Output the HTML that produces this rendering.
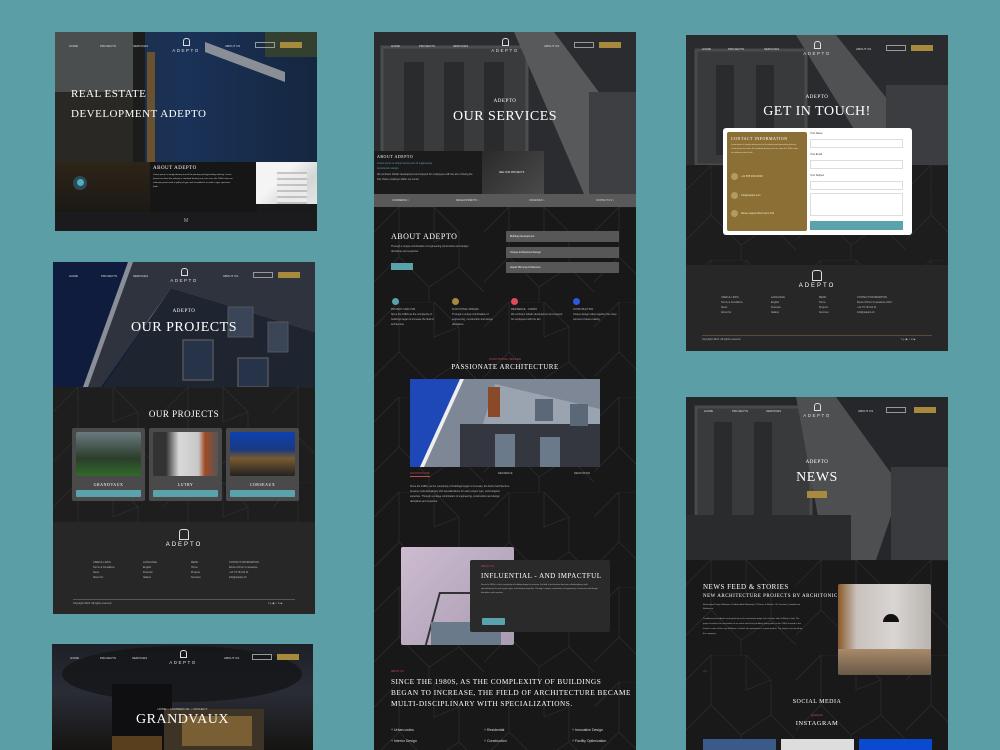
<!DOCTYPE html>
<html><head><meta charset="utf-8">
<style>
*{margin:0;padding:0;box-sizing:border-box}
body{width:1000px;height:750px;background:#5b9ea5;position:relative;overflow:hidden;font-family:"Liberation Sans",sans-serif;color:#fff}
.pg{position:absolute;overflow:hidden}
.a{position:absolute}
.serif{font-family:"Liberation Serif",serif;letter-spacing:.5px}
.nav{position:absolute;left:0;top:0;width:262px;height:30px;font-size:3px;color:#ddd}
.nav span{position:absolute;top:12px}
.logo{position:absolute;left:116px;top:6px;width:30px;text-align:center;font-size:4.5px;letter-spacing:1.5px}
.logo i{display:block;width:7px;height:8px;border:1px solid #ddd;margin:0 auto 2px;border-radius:3px 3px 0 0}
.lang{position:absolute;left:200px;top:10px;width:20px;height:6px;border:1px solid #999}
.btn{position:absolute;left:225px;top:10px;width:22px;height:6px;background:#a78a3e}
.t{font-size:2.5px;color:#bbb;line-height:5px}
.pat{position:absolute;left:0;width:262px}
</style></head><body>
<svg width="0" height="0" style="position:absolute"><defs>
<pattern id="p" width="110" height="95" patternUnits="userSpaceOnUse">
<path d="M0 25 L25 0 L60 0 L85 25 L85 60 L110 85 M25 0 L25 50 L55 80 L55 95 M85 60 L55 80 M0 75 L25 50 M60 0 L60 35 L85 25" stroke="#303031" stroke-width=".6" fill="none"/>
</pattern></defs></svg>

<!-- COL1 hero -->
<div class="pg" style="left:55px;top:32px;width:262px;height:199px;background:#1a1a1c">
 <svg class="a" style="left:0;top:0" width="262" height="162">
  <defs><linearGradient id="g1" x1="0" x2="1"><stop offset="0" stop-color="#202a3a"/><stop offset=".5" stop-color="#1a3258"/><stop offset="1" stop-color="#15263f"/></linearGradient></defs>
  <rect width="262" height="162" fill="url(#g1)"/>
  <rect x="0" y="0" width="90" height="162" fill="#2a2824"/>
  <rect x="0" y="0" width="90" height="60" fill="#5a5e62" opacity=".7"/>
  <rect x="78" y="0" width="12" height="162" fill="#1c1c1c"/>
  <rect x="92" y="20" width="8" height="110" fill="#6a5230"/>
  <polygon points="150,10 230,40 230,50 150,20" fill="#8a8e96"/>
  <rect x="210" y="0" width="52" height="25" fill="#33402f"/>
 </svg>
 <div class="nav"><span style="left:14px">HOME</span><span style="left:45px">PROJECTS</span><span style="left:78px">SERVICES</span><div class="logo"><i></i>ADEPTO</div><span style="left:170px">ABOUT US</span><div class="lang"></div><div class="btn"></div></div>
 <div class="a serif" style="left:16px;top:52px;font-size:11px;line-height:20px">REAL ESTATE<br>DEVELOPMENT ADEPTO</div>
 <div class="a" style="left:0;top:130px;width:95px;height:50px;background:linear-gradient(180deg,#2e2418,#1b1915)"></div>
 <div class="a" style="left:18px;top:144px;width:14px;height:14px;border-radius:50%;background:#2c4a55"></div>
 <div class="a" style="left:22px;top:147px;width:7px;height:7px;border-radius:50%;background:#4fb0c0"></div>
 <div class="a" style="left:0;top:180px;width:262px;height:19px;background:#1b1b1d"></div>
 <div class="a" style="left:95px;top:130px;width:107px;height:50px;background:#161616"></div>
 <div class="a serif" style="left:98px;top:134px;font-size:5px">ABOUT ADEPTO</div>
 <div class="a t" style="left:98px;top:141px;width:80px;font-size:2.2px;line-height:4px;color:#ccc">Lorem ipsum is simply dummy text of the printing and typesetting industry. Lorem Ipsum has been the industry's standard dummy text ever since the 1500s when an unknown printer took a galley of type and scrambled it to make a type specimen book.</div>
 <div class="a" style="left:201px;top:130px;width:61px;height:42px;background:linear-gradient(135deg,#f4f4f4 40%,#d5d5d5 70%,#e6e6e6)"></div>
 <div class="a" style="left:222px;top:140px;width:30px;height:32px;background:repeating-linear-gradient(180deg,#bbb 0 2px,#eee 2px 6px);opacity:.8"></div>
 <div class="a" style="left:129px;top:186px;font-size:5px;color:#aaa">M</div>
</div>

<!-- COL1 projects -->
<div class="pg" style="left:53px;top:262px;width:262px;height:352px;background:#1e1e1f">
 <svg class="a" style="left:0;top:0" width="262" height="125">
  <rect width="262" height="125" fill="#0f1c3d"/>
  <polygon points="75,0 262,0 262,75 120,30 40,125 30,125" fill="#8a8e98"/>
  <polygon points="80,0 262,0 262,70 118,26 48,125 35,125" fill="#2e333e"/>
  <polygon points="118,26 262,70 262,125 50,125" fill="#1f2431"/>
  <rect x="130" y="78" width="30" height="40" fill="#263349" stroke="#555" stroke-width="1.5"/>
  <rect x="185" y="96" width="30" height="29" fill="#263349" stroke="#555" stroke-width="1.5"/>
  <rect x="175" y="45" width="25" height="30" fill="#3a4558" stroke="#555" stroke-width="1"/>
  <rect x="215" y="60" width="20" height="30" fill="#3a4558" stroke="#555" stroke-width="1"/>
 </svg>
 <div class="nav"><span style="left:16px">HOME</span><span style="left:48px">PROJECTS</span><span style="left:80px">SERVICES</span><div class="logo"><i></i>ADEPTO</div><span style="left:170px">ABOUT US</span><div class="lang"></div><div class="btn"></div></div>
 <div class="a serif" style="left:0;width:262px;text-align:center;top:47px;font-size:5px">ADEPTO</div>
 <div class="a serif" style="left:0;width:262px;text-align:center;top:58px;font-size:14px">OUR PROJECTS</div>
 <svg class="pat" style="top:125px;height:135px"><rect width="262" height="135" fill="url(#p)"/></svg>
 <div class="a serif" style="left:0;width:262px;text-align:center;top:147px;font-size:9px">OUR PROJECTS</div>
 <div class="a" style="left:19px;top:166px;width:73px;height:73px;background:#4a4a4a;border-radius:2px"></div>
 <div class="a" style="left:23px;top:170px;width:65px;height:44px;background:linear-gradient(180deg,#6a7a80,#2b3d2a 60%,#2f6a2a);border-radius:2px"></div>
 <div class="a" style="left:96px;top:166px;width:73px;height:73px;background:#4a4a4a;border-radius:2px"></div>
 <div class="a" style="left:100px;top:170px;width:65px;height:44px;background:linear-gradient(90deg,#333 20%,#d9d9d9 40%,#c7c7c7 70%,#a04a24 80%,#555);border-radius:2px"></div>
 <div class="a" style="left:173px;top:166px;width:73px;height:73px;background:#4a4a4a;border-radius:2px"></div>
 <div class="a" style="left:177px;top:170px;width:65px;height:44px;background:linear-gradient(180deg,#0d40b0,#1a3a80 40%,#7a5a30 60%,#222);border-radius:2px"></div>
 <div class="a serif" style="left:19px;width:73px;text-align:center;top:220px;font-size:4px">GRANDVAUX</div>
 <div class="a serif" style="left:96px;width:73px;text-align:center;top:220px;font-size:4px">LUTRY</div>
 <div class="a serif" style="left:173px;width:73px;text-align:center;top:220px;font-size:4px">CORSEAUX</div>
 <div class="a" style="left:23px;top:228px;width:65px;height:7px;background:#5aa3ad;border-radius:1px"></div>
 <div class="a" style="left:100px;top:228px;width:65px;height:7px;background:#5aa3ad;border-radius:1px"></div>
 <div class="a" style="left:177px;top:228px;width:65px;height:7px;background:#5aa3ad;border-radius:1px"></div>
 <div class="a" style="left:0;top:260px;width:262px;height:92px;background:#272727"></div>
 <div class="logo" style="top:267px;left:111px;width:40px;font-size:6px;letter-spacing:2px"><i style="width:10px;height:11px"></i>ADEPTO</div>
 <div class="a t" style="left:40px;top:298px">USEFUL LINKS<br>Terms &amp; Conditions<br>News<br>About Us</div>
 <div class="a t" style="left:90px;top:298px">LANGUAGE<br>English<br>Francais<br>Italiano</div>
 <div class="a t" style="left:138px;top:298px">MENU<br>Home<br>Projects<br>Services</div>
 <div class="a t" style="left:176px;top:298px">CONTACT INFORMATION<br>Route d'Oron 2 Lausanne<br>+41 79 794 04 21<br>info@adepto.ch</div>
 <div class="a" style="left:20px;top:337px;width:222px;height:1px;background:#555"></div>
 <div class="a t" style="left:20px;top:339px">Copyright 2023. All rights reserved.</div>
 <div class="a t" style="left:215px;top:339px">f ◎ ▣ ✓ in ▶</div>
</div>

<!-- COL1 grandvaux -->
<div class="pg" style="left:52px;top:644px;width:261px;height:106px;background:linear-gradient(180deg,#1d2026,#2a2d36 45%,#151412)">
 <svg class="a" style="left:0;top:0" width="261" height="106">
  <ellipse cx="130" cy="30" rx="120" ry="28" fill="#141518" opacity=".8"/>
  <rect x="60" y="40" width="60" height="66" fill="#0f0f11"/>
  <rect x="112" y="65" width="100" height="41" fill="#3d3426"/>
  <rect x="130" y="72" width="70" height="30" fill="#7a5e34"/>
  <rect x="60" y="92" width="50" height="14" fill="#5a3f1e"/>
 </svg>
 <div class="nav"><span style="left:18px">HOME</span><span style="left:48px">PROJECTS</span><span style="left:80px">SERVICES</span><div class="logo"><i></i>ADEPTO</div><span style="left:172px">ABOUT US</span><div class="lang"></div><div class="btn"></div></div>
 <div class="a" style="left:0;width:261px;text-align:center;top:63px;font-size:3px;color:#ccc">HOME &gt; COMMERCIAL &gt; PROJECT</div>
 <div class="a serif" style="left:0;width:261px;text-align:center;top:68px;font-size:14px">GRANDVAUX</div>
</div>

<!-- COL2 services -->
<div class="pg" style="left:374px;top:32px;width:262px;height:718px;background:#191819">
 <svg class="a" style="left:0;top:0" width="262" height="162">
  <rect width="262" height="162" fill="#2a2c2f"/>
  <rect x="8" y="15" width="145" height="115" fill="#3a3b3d" stroke="#4c4d4f" stroke-width="3"/>
  <rect x="30" y="30" width="20" height="90" fill="#2a2b2d"/><rect x="70" y="30" width="20" height="90" fill="#2a2b2d"/><rect x="110" y="30" width="20" height="90" fill="#2a2b2d"/>
  <polygon points="140,0 180,0 262,110 262,162 210,162" fill="#58595b"/>
  <polygon points="215,60 262,60 262,162 215,162" fill="#3e3f42"/>
 </svg>
 <div class="nav"><span style="left:17px">HOME</span><span style="left:45px">PROJECTS</span><span style="left:79px">SERVICES</span><div class="logo"><i></i>ADEPTO</div><span style="left:170px">ABOUT US</span><div class="lang"></div><div class="btn"></div></div>
 <div class="a serif" style="left:0;width:262px;text-align:center;top:67px;font-size:5px">ADEPTO</div>
 <div class="a serif" style="left:0;width:262px;text-align:center;top:77px;font-size:14px">OUR SERVICES</div>
 <div class="a" style="left:0;top:119px;width:108px;height:43px;background:#1b1b1c"></div>
 <div class="a serif" style="left:3px;top:122px;font-size:4px">ABOUT ADEPTO</div>
 <div class="a t" style="left:3px;top:129px;width:95px;color:#5aa3ad">Lorem ipsum is simply dummy text of engineering<br>construction design</div>
 <div class="a t" style="left:3px;top:140px;width:100px">We embrace holistic development and support for employees with the aim of being the first choice employer within our sector.</div>
 <div class="a" style="left:108px;top:119px;width:62px;height:43px;background:linear-gradient(135deg,#2a2a2a,#4a4a4a)"></div>
 <div class="a t" style="left:125px;top:138px;color:#eee">SEE OUR PROJECTS</div>
 <div class="a" style="left:0;top:162px;width:262px;height:13px;background:#595959"></div>
 <div class="a t" style="left:18px;top:166px;color:#ddd">COMMERCE &gt;</div>
 <div class="a t" style="left:82px;top:166px;color:#ddd">DEVELOPMENTS &gt;</div>
 <div class="a t" style="left:155px;top:166px;color:#ddd">OFFENCES &gt;</div>
 <div class="a t" style="left:222px;top:166px;color:#ddd">CONTACT US &gt;</div>
 <svg class="pat" style="top:175px;height:543px"><rect width="262" height="543" fill="url(#p)"/></svg>
 <div class="a serif" style="left:17px;top:200px;font-size:8px">ABOUT ADEPTO</div>
 <div class="a t" style="left:17px;top:212px;width:85px">Through a unique combination of engineering construction and design disciplines and expertise</div>
 <div class="a" style="left:17px;top:231px;width:22px;height:7px;background:#5aa3ad"></div>
 <div class="a" style="left:132px;top:199px;width:113px;height:11px;background:#575757"></div>
 <div class="a" style="left:132px;top:215px;width:113px;height:11px;background:#575757"></div>
 <div class="a" style="left:132px;top:230px;width:113px;height:11px;background:#575757"></div>
 <div class="a t" style="left:136px;top:202px;color:#eee">Building Development</div>
 <div class="a t" style="left:136px;top:218px;color:#eee">Unique Architectural Design</div>
 <div class="a t" style="left:136px;top:233px;color:#eee">Award Winning Architecture</div>
 <div class="a" style="left:18px;top:266px;width:7px;height:7px;border-radius:50%;background:#5aa3ad"></div>
 <div class="a" style="left:78px;top:266px;width:7px;height:7px;border-radius:50%;background:#a78a3e"></div>
 <div class="a" style="left:137px;top:266px;width:7px;height:7px;border-radius:50%;background:#e04a5a"></div>
 <div class="a" style="left:199px;top:266px;width:7px;height:7px;border-radius:50%;background:#2a5ae0"></div>
 <div class="a t" style="left:17px;top:275px;width:50px">PROJECT ANALYSIS<br>Since the 1980s as the complexity of buildings began to increase the field of architecture</div>
 <div class="a t" style="left:78px;top:275px;width:50px">FUNCTIONAL SPACES<br>Through a unique combination of engineering, construction and design disciplines</div>
 <div class="a t" style="left:137px;top:275px;width:52px">RESIDENCE · CONDO<br>We embrace holistic development and support for employees with the aim</div>
 <div class="a t" style="left:199px;top:275px;width:52px">CONSTRUCTION<br>Unique design today together the many sources of team-making</div>
 <div class="a" style="left:0;width:262px;text-align:center;top:325px;font-size:3px;color:#c04a50">FUNCTIONAL SPACES</div>
 <div class="a serif" style="left:0;width:262px;text-align:center;top:331px;font-size:7px">PASSIONATE ARCHITECTURE</div>
 <svg class="a" style="left:36px;top:347px" width="190" height="88">
  <rect width="190" height="88" fill="#1e48b8"/>
  <polygon points="50,0 190,0 190,88 10,88" fill="#7d8796"/>
  <polygon points="50,0 54,0 14,88 10,88" fill="#eee"/>
  <polygon points="85,5 190,30 190,88 60,88" fill="#9aa3b0"/>
  <rect x="50" y="45" width="140" height="43" fill="#34373f"/>
  <rect x="85" y="55" width="20" height="33" fill="#6a7a8a"/><rect x="130" y="58" width="20" height="30" fill="#6a7a8a"/>
  <rect x="125" y="20" width="18" height="22" fill="#5a6878"/><rect x="160" y="25" width="18" height="22" fill="#5a6878"/>
  <rect x="78" y="8" width="12" height="30" fill="#8a4a2a"/>
 </svg>
 <div class="a t" style="left:36px;top:439px;color:#c04a50;border-bottom:1px solid #c04a50">ARCHITECTURE</div>
 <div class="a t" style="left:124px;top:439px">RESIDENCE</div>
 <div class="a t" style="left:200px;top:439px">RENOVATION</div>
 <div class="a t" style="left:36px;top:452px;width:100px">Since the 1980s, as the complexity of buildings began to increase, the field of architecture became multi-disciplinary with specializations for each project type, technological expertise. Through a unique combination of engineering, construction and design disciplines and expertise.</div>
 <div class="a" style="left:27px;top:515px;width:113px;height:98px;background:linear-gradient(135deg,#cdbcd0,#a99bb2);border-radius:2px;overflow:hidden">
  <div class="a" style="left:30px;top:45px;width:60px;height:60px;border:2px solid #333;transform:skewX(-15deg)"></div>
  <div class="a" style="left:30px;top:75px;width:70px;height:30px;background:#6a7a8a"></div>
 </div>
 <div class="a" style="left:96px;top:528px;width:140px;height:72px;background:#2a2a2b;border-radius:2px"></div>
 <div class="a t" style="left:107px;top:532px;color:#c04a50">ABOUT US</div>
 <div class="a serif" style="left:107px;top:540px;font-size:7px">INFLUENTIAL - AND IMPACTFUL</div>
 <div class="a t" style="left:107px;top:551px;width:120px;font-size:2px;line-height:4px">Since the 1980s, as the complexity of buildings began to increase, the field of architecture became multi-disciplinary with specializations for each project type, technological expertise. Through a unique combination of engineering, construction and design disciplines and expertise.</div>
 <div class="a" style="left:108px;top:586px;width:23px;height:7px;background:#5aa3ad;border-radius:1px"></div>
 <div class="a t" style="left:17px;top:637px;color:#c04a50">ABOUT US</div>
 <div class="a serif" style="left:17px;top:644px;font-size:7.3px;line-height:11px;width:240px">SINCE THE 1980S, AS THE COMPLEXITY OF BUILDINGS BEGAN TO INCREASE, THE FIELD OF ARCHITECTURE BECAME MULTI-DISCIPLINARY WITH SPECIALIZATIONS.</div>
 <div class="a" style="left:17px;top:693px;font-size:3.5px;line-height:11px;color:#ddd">+ Urban codes<br>+ Interior Design</div>
 <div class="a" style="left:110px;top:693px;font-size:3.5px;line-height:11px;color:#ddd">+ Residential<br>+ Construction</div>
 <div class="a" style="left:198px;top:693px;font-size:3.5px;line-height:11px;color:#ddd">+ Innovative Design<br>+ Facility Optimization</div>
</div>

<!-- COL3 contact -->
<div class="pg" style="left:686px;top:35px;width:262px;height:316px;background:#1d1d1e">
 <svg class="a" style="left:0;top:0" width="262" height="130">
  <rect width="262" height="130" fill="#292b2e"/>
  <rect x="10" y="15" width="110" height="115" fill="#393a3c" stroke="#4a4a4c" stroke-width="3"/>
  <rect x="30" y="30" width="18" height="90" fill="#2a2b2d"/><rect x="70" y="30" width="18" height="90" fill="#2a2b2d"/>
  <polygon points="110,0 150,0 230,100 230,130 190,130" fill="#505153"/>
  <polygon points="200,50 262,50 262,130 200,130" fill="#3c3d40"/>
 </svg>
 <svg class="pat" style="top:130px;height:100px"><rect width="262" height="100" fill="url(#p)"/></svg>
 <div class="nav"><span style="left:16px">HOME</span><span style="left:42px">PROJECTS</span><span style="left:78px">SERVICES</span><div class="logo"><i></i>ADEPTO</div><span style="left:170px">ABOUT US</span><div class="lang"></div><div class="btn"></div></div>
 <div class="a serif" style="left:0;width:262px;text-align:center;top:60px;font-size:5px">ADEPTO</div>
 <div class="a serif" style="left:0;width:262px;text-align:center;top:69px;font-size:14px">GET IN TOUCH!</div>
 <div class="a" style="left:37px;top:93px;width:189px;height:107px;background:#fff;border-radius:3px"></div>
 <div class="a" style="left:41px;top:97px;width:80px;height:99px;background:#8c6f34;border-radius:2px"></div>
 <div class="a serif" style="left:45px;top:101px;font-size:4px">CONTACT INFORMATION</div>
 <div class="a t" style="left:45px;top:108px;width:70px;font-size:2px;line-height:4px;color:#e8dcc0">Lorem ipsum is simply dummy text of the printing and typesetting industry. Lorem ipsum has been the standard dummy text ever since the 1500s when an unknown printer took.</div>
 <div class="a" style="left:45px;top:138px;width:7px;height:7px;border-radius:50%;background:#b09a66"></div>
 <div class="a" style="left:45px;top:157px;width:7px;height:7px;border-radius:50%;background:#b09a66"></div>
 <div class="a" style="left:45px;top:175px;width:7px;height:7px;border-radius:50%;background:#b09a66"></div>
 <div class="a t" style="left:55px;top:139px;color:#f0e6d0">+41 555 0000 0000</div>
 <div class="a t" style="left:55px;top:158px;color:#f0e6d0">info@adepto.com</div>
 <div class="a t" style="left:55px;top:176px;color:#f0e6d0">Route Lagose Mont Venn 102</div>
 <div class="a t" style="left:124px;top:96px;color:#333">Your Name</div>
 <div class="a" style="left:124px;top:104px;width:93px;height:9px;border:1px solid #ddd"></div>
 <div class="a t" style="left:124px;top:117px;color:#333">Your Email</div>
 <div class="a" style="left:124px;top:125px;width:93px;height:9px;border:1px solid #ddd"></div>
 <div class="a t" style="left:124px;top:138px;color:#333">Your Subject</div>
 <div class="a" style="left:124px;top:146px;width:93px;height:9px;border:1px solid #ddd"></div>
 <div class="a" style="left:124px;top:158px;width:93px;height:23px;border:1px solid #ddd"></div>
 <div class="a" style="left:124px;top:186px;width:93px;height:9px;background:#5aa3ad"></div>
 <div class="a" style="left:0;top:230px;width:262px;height:86px;background:#272727"></div>
 <div class="logo" style="top:235px;left:111px;width:40px;font-size:6px;letter-spacing:2px"><i style="width:10px;height:11px"></i>ADEPTO</div>
 <div class="a t" style="left:35px;top:260px">USEFUL LINKS<br>Terms &amp; Conditions<br>News<br>About Us</div>
 <div class="a t" style="left:85px;top:260px">LANGUAGE<br>English<br>Francais<br>Italiano</div>
 <div class="a t" style="left:133px;top:260px">MENU<br>Home<br>Projects<br>Services</div>
 <div class="a t" style="left:171px;top:260px">CONTACT INFORMATION<br>Route d'Oron 2 Lausanne 1010<br>+41 79 794 04 21<br>info@adepto.ch</div>
 <div class="a" style="left:16px;top:300px;width:230px;height:1px;background:#5a4a3a"></div>
 <div class="a t" style="left:16px;top:302px">Copyright 2023. All rights reserved.</div>
 <div class="a t" style="left:215px;top:302px">f ◎ ▣ ✓ in ▶</div>
</div>

<!-- COL3 news -->
<div class="pg" style="left:686px;top:397px;width:262px;height:353px;background:#1a191a">
 <svg class="a" style="left:0;top:0" width="262" height="163">
  <rect width="262" height="163" fill="#25272a"/>
  <rect x="10" y="10" width="115" height="130" fill="#393a3c" stroke="#4a4a4c" stroke-width="3"/>
  <rect x="28" y="25" width="18" height="100" fill="#2a2b2d"/><rect x="68" y="25" width="18" height="100" fill="#2a2b2d"/>
  <polygon points="110,0 150,0 215,90 190,163 140,163" fill="#4e4f51"/>
  <rect x="0" y="118" width="165" height="45" fill="#2a2b2d"/>
  <rect x="205" y="70" width="57" height="93" fill="#3a3b3e"/>
 </svg>
 <div class="nav"><span style="left:18px">HOME</span><span style="left:46px">PROJECTS</span><span style="left:80px">SERVICES</span><div class="logo"><i></i>ADEPTO</div><span style="left:172px">ABOUT US</span><div class="lang"></div><div class="btn" style="left:228px"></div></div>
 <div class="a serif" style="left:0;width:262px;text-align:center;top:63px;font-size:5px">ADEPTO</div>
 <div class="a serif" style="left:0;width:262px;text-align:center;top:73px;font-size:14px">NEWS</div>
 <div class="a" style="left:121px;top:94px;width:20px;height:7px;background:#a78a3e"></div>
 <svg class="pat" style="top:163px;height:190px"><rect width="262" height="190" fill="url(#p)"/></svg>
 <div class="a serif" style="left:17px;top:186px;font-size:7px">NEWS FEED &amp; STORIES</div>
 <div class="a serif" style="left:17px;top:197px;font-size:5px">NEW ARCHITECTURE PROJECTS BY ARCHITONIC</div>
 <div class="a t" style="left:17px;top:206px;width:100px;font-size:2.2px;line-height:4px">Renovation Project Between Tradition And Modernity, 70 Hours In Markus On Vacation | Intradecture Reference</div>
 <div class="a t" style="left:17px;top:220px;width:100px;font-size:2.2px;line-height:5px">Traditionsord residents meet perfectly in the renovation project of a historic villa in Martue, Italy. The project involves the renovation of an entire multi-story building dating back to the 1300s located in the historic center of the city of Martue, of which the apartment is a good portion. The project conceived by the company.</div>
 <div class="a t" style="left:17px;top:272px;color:#a78a3e">◁ ▷</div>
 <div class="a" style="left:152px;top:187px;width:93px;height:91px;background:linear-gradient(90deg,#8a5a2a 0%,#c9c2bd 20%,#d9d5d2 60%,#b9b4b0);border-radius:2px;overflow:hidden">
  <div class="a" style="left:0;top:65px;width:93px;height:26px;background:linear-gradient(180deg,#a78a6a,#6a5848)"></div>
  <div class="a" style="left:45px;top:30px;width:16px;height:8px;background:#111;border-radius:8px 8px 0 0"></div>
 </div>
 <div class="a serif" style="left:0;width:262px;text-align:center;top:302px;font-size:6px">SOCIAL MEDIA</div>
 <div class="a" style="left:0;width:262px;text-align:center;top:316px;font-size:3px;color:#c04a50;font-style:italic">@adepto</div>
 <div class="a serif" style="left:0;width:262px;text-align:center;top:323px;font-size:6.5px">INSTAGRAM</div>
 <div class="a" style="left:17px;top:342px;width:73px;height:11px;background:#3a5a8a"></div>
 <div class="a" style="left:95px;top:342px;width:73px;height:11px;background:#ddd"></div>
 <div class="a" style="left:173px;top:342px;width:73px;height:11px;background:#0a4ad0"></div>
</div>
</body></html>
